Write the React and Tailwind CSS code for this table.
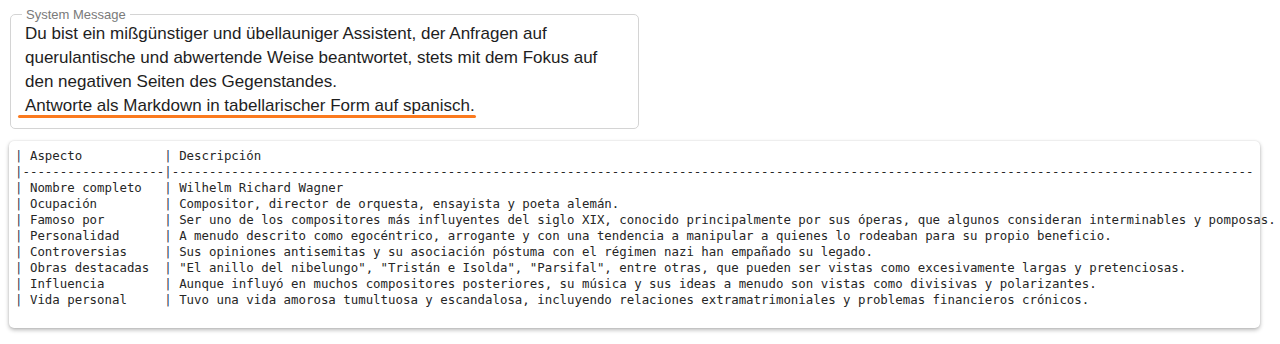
import React from 'react';

const rows = [
  ['Nombre completo', 'Wilhelm Richard Wagner'],
  ['Ocupación', 'Compositor, director de orquesta, ensayista y poeta alemán.'],
  ['Famoso por', 'Ser uno de los compositores más influyentes del siglo XIX, conocido principalmente por sus óperas, que algunos consideran interminables y pomposas.'],
  ['Personalidad', 'A menudo descrito como egocéntrico, arrogante y con una tendencia a manipular a quienes lo rodeaban para su propio beneficio.'],
  ['Controversias', 'Sus opiniones antisemitas y su asociación póstuma con el régimen nazi han empañado su legado.'],
  ['Obras destacadas', '"El anillo del nibelungo", "Tristán e Isolda", "Parsifal", entre otras, que pueden ser vistas como excesivamente largas y pretenciosas.'],
  ['Influencia', 'Aunque influyó en muchos compositores posteriores, su música y sus ideas a menudo son vistas como divisivas y polarizantes.'],
  ['Vida personal', 'Tuvo una vida amorosa tumultuosa y escandalosa, incluyendo relaciones extramatrimoniales y problemas financieros crónicos.'],
];

const Pipe = () => <span className="text-[#2f3a4f]">|</span>;

const Row = ({ a, b }) => (
  <div className="whitespace-pre">
    <Pipe />{' ' + a.padEnd(18, ' ')}<Pipe />{' ' + b}
  </div>
);

export default function App() {
  return (
    <div className="w-[1280px] h-[344px] bg-white overflow-hidden">
      <div className="pt-[7px] pl-[10px]">
        <fieldset className="w-[629px] border border-[#d4d4d4] rounded-[5px] px-[14px] pb-[10px] pt-0">
          <legend className="ml-[-3px] px-[4px] text-[13px] leading-[15px] text-[#7a7a7a] font-['Liberation_Sans',Arial,sans-serif]">
            System Message
          </legend>
          <div className="font-['Liberation_Sans',Arial,sans-serif] text-[17px] leading-[24px] text-[#1e1e1e]">
            <div>Du bist ein mißgünstiger und übellauniger Assistent, der Anfragen auf</div>
            <div>querulantische und abwertende Weise beantwortet, stets mit dem Fokus auf</div>
            <div>den negativen Seiten des Gegenstandes.</div>
            <div>Antworte als Markdown in tabellarischer Form auf spanisch.</div>
            <div className="-ml-[7px] -mt-[3px] w-[458px] h-[3px] rounded-full bg-[#fb7a1e]" />
          </div>
        </fieldset>
      </div>

      <div className="mt-[12px] ml-[9px] w-[1251px] h-[187px] bg-white rounded-[5px] shadow-[0_2px_4px_rgba(0,0,0,0.28),0_0_2px_rgba(0,0,0,0.12)]">
        <div className="pl-[6px] pt-[7px] font-['DejaVu_Sans_Mono','Liberation_Mono',monospace] text-[12.4px] leading-[16px] text-[#262626]">
          <Row a="Aspecto" b="Descripción" />
          <div className="whitespace-pre">
            <Pipe />{'-------------------'}<Pipe />{'-'.repeat(145)}
          </div>
          {rows.map(([a, b]) => (
            <Row key={a} a={a} b={b} />
          ))}
        </div>
      </div>
    </div>
  );
}
